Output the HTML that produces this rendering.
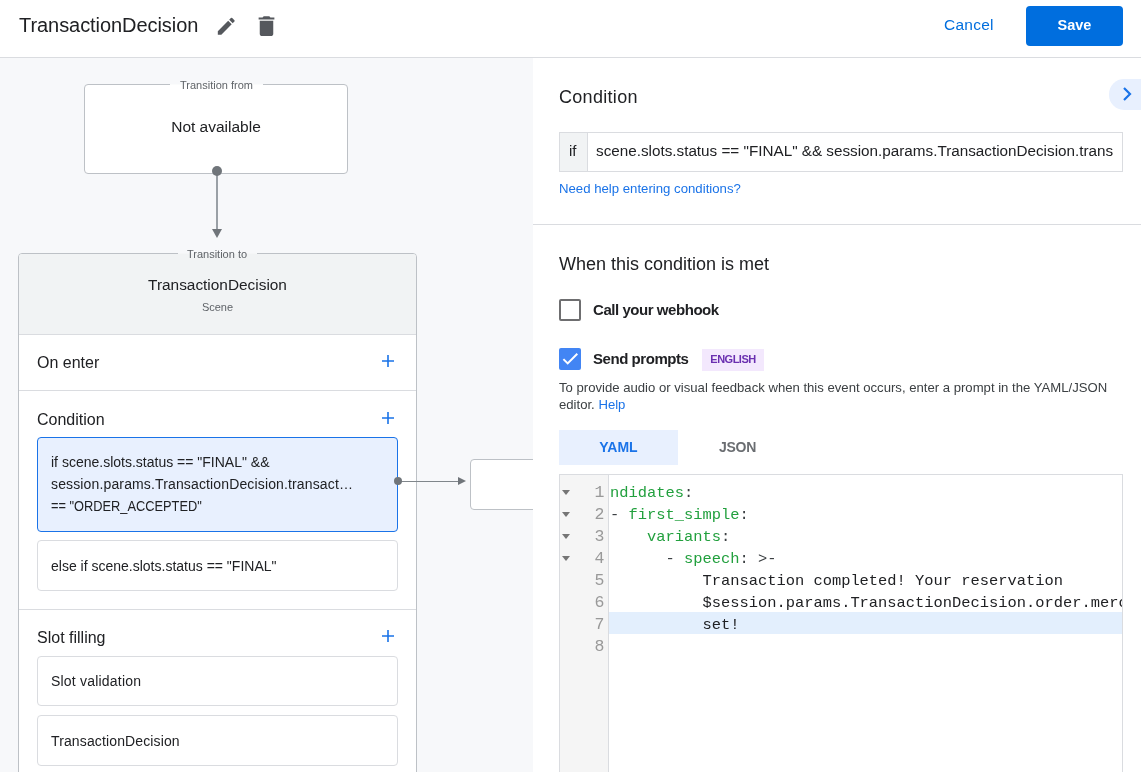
<!DOCTYPE html>
<html>
<head>
<meta charset="utf-8">
<style>
* { box-sizing: border-box; }
html, body { margin: 0; padding: 0; width: 1141px; height: 772px; overflow: hidden; background: #fff; }
body { font-family: "Liberation Sans", sans-serif; color: #202124; position: relative; }
.a { position: absolute; white-space: nowrap; }
.mono { font-family: "Liberation Mono", monospace; }
.ln { position:absolute; left:0; width:44.5px; text-align:right; font-size:16.5px; line-height:22px; margin-top:1.5px; color:#999; white-space:pre; }
.code { position:absolute; left:50px; font-size:15.42px; line-height:22px; margin-top:1.5px; color:#202124; white-space:pre; }
.k { color:#22a03e; }
.p { color:#3c4043; }
</style>
</head>
<body>
<div id="root" style="position:absolute;left:0;top:0;width:1141px;height:772px;overflow:hidden;will-change:transform;">
<!-- header -->
<div class="a" style="left:0;top:0;width:1141px;height:57px;background:#fff;"></div>
<div class="a" style="left:0;top:57px;width:1141px;height:1px;background:#dadce0;"></div>
<div class="a" style="left:19px;top:9px;font-size:20px;line-height:32px;letter-spacing:-0.06px;color:#202124;">TransactionDecision</div>
<!-- pencil -->
<svg class="a" style="left:215.2px;top:14.8px" width="22.5" height="22.5" viewBox="0 0 24 24"><path fill="#55585d" d="M3 17.25V21h3.75L17.81 9.94l-3.75-3.75L3 17.25zM20.71 7.04a.996.996 0 0 0 0-1.41l-2.34-2.34a.996.996 0 0 0-1.41 0l-1.83 1.83 3.75 3.75 1.83-1.83z"/></svg>
<!-- trash -->
<svg class="a" style="left:252.7px;top:12.6px" width="27" height="26.4" viewBox="0 0 24 24" preserveAspectRatio="none"><path fill="#55585d" d="M6 19c0 1.1.9 2 2 2h8c1.1 0 2-.9 2-2V7H6v12zM19 4h-3.5l-1-1h-5l-1 1H5v2h14V4z"/></svg>
<div class="a" style="left:944px;top:12.5px;font-size:15.5px;line-height:24px;letter-spacing:0.25px;color:#006ede;">Cancel</div>
<div class="a" style="left:1026px;top:6px;width:97px;height:40px;background:#006ede;border-radius:4px;"></div>
<div class="a" style="left:1026px;top:5px;width:97px;height:40px;font-size:14.5px;line-height:40px;color:#fff;text-align:center;font-weight:bold;">Save</div>

<!-- left panel -->
<div class="a" style="left:0;top:58px;width:533px;height:714px;background:#f7f8fa;"></div>

<!-- transition from -->
<div class="a" style="left:84px;top:84px;width:264px;height:90px;background:#fff;border:1px solid #bdc1c6;border-radius:4px;"></div>
<div class="a" style="left:170px;top:84px;width:93px;height:1px;background:#fbfcfc;"></div>
<div class="a" style="left:170px;top:77px;width:93px;font-size:11px;line-height:16px;color:#5f6368;text-align:center;">Transition from</div>
<div class="a" style="left:84px;top:115px;width:264px;font-size:15.5px;line-height:24px;text-align:center;">Not available</div>
<div class="a" style="left:216px;top:171px;width:2px;height:58px;background:#9aa0a6;"></div>
<div class="a" style="left:212px;top:166px;width:10px;height:10px;border-radius:50%;background:#70757a;"></div>
<svg class="a" style="left:212px;top:229px" width="10" height="9" viewBox="0 0 10 9"><path d="M0 0 L10 0 L5 9 Z" fill="#70757a"/></svg>

<!-- transition to box -->
<div class="a" style="left:18px;top:253px;width:399px;height:540px;background:#fff;border:1px solid #bdc1c6;border-radius:4px;overflow:hidden;">
  <div style="position:absolute;left:0;top:0;width:100%;height:81px;background:#f1f3f4;"></div>
</div>
<div class="a" style="left:178px;top:253px;width:79px;height:1px;background:#f5f6f7;"></div>
<div class="a" style="left:177px;top:246px;width:80px;font-size:11px;line-height:16px;color:#5f6368;text-align:center;">Transition to</div>
<div class="a" style="left:18px;top:273px;width:399px;font-size:15.4px;line-height:24px;text-align:center;">TransactionDecision</div>
<div class="a" style="left:18px;top:299px;width:399px;font-size:11px;line-height:16px;text-align:center;color:#5f6368;">Scene</div>
<div class="a" style="left:19px;top:334px;width:397px;height:1px;background:#dadce0;"></div>
<div class="a" style="left:37px;top:351px;font-size:16px;line-height:24px;">On enter</div>
<svg class="a" style="left:380px;top:353px" width="16" height="16" viewBox="0 0 16 16"><path d="M8 2v12M2 8h12" stroke="#1a73e8" stroke-width="1.6"/></svg>
<div class="a" style="left:19px;top:390px;width:397px;height:1px;background:#dadce0;"></div>
<div class="a" style="left:37px;top:408px;font-size:16px;line-height:24px;">Condition</div>
<svg class="a" style="left:380px;top:410px" width="16" height="16" viewBox="0 0 16 16"><path d="M8 2v12M2 8h12" stroke="#1a73e8" stroke-width="1.6"/></svg>

<div class="a" style="left:37px;top:437px;width:361px;height:95px;background:#e8f0fe;border:1px solid #1a73e8;border-radius:4px;"></div>
<div class="a" style="left:51px;top:451px;font-size:14px;line-height:22px;">if scene.slots.status == "FINAL" &amp;&amp;<br><span style="letter-spacing:0.14px">session.params.TransactionDecision.transact…</span><br><span style="display:inline-block;transform:scaleX(0.915);transform-origin:0 0;">== "ORDER_ACCEPTED"</span></div>
<div class="a" style="left:37px;top:540px;width:361px;height:51px;background:#fff;border:1px solid #dadce0;border-radius:4px;"></div>
<div class="a" style="left:51px;top:555px;font-size:14px;line-height:22px;">else if scene.slots.status == "FINAL"</div>
<!-- connector -->
<div class="a" style="left:398px;top:480.5px;width:62px;height:1.2px;background:#80868b;"></div>
<div class="a" style="left:394px;top:477px;width:8px;height:8px;border-radius:50%;background:#70757a;"></div>
<svg class="a" style="left:458px;top:477px" width="8" height="8" viewBox="0 0 8 8"><path d="M0 0 L8 4 L0 8 Z" fill="#70757a"/></svg>
<div class="a" style="left:470px;top:459px;width:100px;height:51px;background:#fff;border:1px solid #bdc1c6;border-radius:4px;"></div>

<div class="a" style="left:19px;top:609px;width:397px;height:1px;background:#dadce0;"></div>
<div class="a" style="left:37px;top:626px;font-size:16px;line-height:24px;">Slot filling</div>
<svg class="a" style="left:380px;top:628px" width="16" height="16" viewBox="0 0 16 16"><path d="M8 2v12M2 8h12" stroke="#1a73e8" stroke-width="1.6"/></svg>
<div class="a" style="left:37px;top:656px;width:361px;height:50px;background:#fff;border:1px solid #dadce0;border-radius:4px;"></div>
<div class="a" style="left:51px;top:670px;font-size:14px;line-height:22px;letter-spacing:0.2px;">Slot validation</div>
<div class="a" style="left:37px;top:715px;width:361px;height:51px;background:#fff;border:1px solid #dadce0;border-radius:4px;"></div>
<div class="a" style="left:51px;top:730px;font-size:14px;line-height:22px;letter-spacing:0.13px;">TransactionDecision</div>

<!-- right panel -->
<div class="a" style="left:533px;top:58px;width:608px;height:714px;background:#fff;"></div>
<div class="a" style="left:559px;top:84px;font-size:18px;line-height:26px;letter-spacing:0.3px;">Condition</div>
<div class="a" style="left:1109px;top:79px;width:40px;height:31px;background:#e8f0fe;border-radius:15px 0 0 15px;"></div>
<svg class="a" style="left:1117px;top:82px" width="20" height="24" viewBox="0 0 20 24"><path d="M7 6 L13 12 L7 18" fill="none" stroke="#1a73e8" stroke-width="2.2"/></svg>

<div class="a" style="left:559px;top:132px;width:564px;height:40px;border:1px solid #dadce0;background:#fff;"></div>
<div class="a" style="left:560px;top:133px;width:28px;height:38px;background:#f1f3f4;border-right:1px solid #dadce0;"></div>
<div class="a" style="left:569px;top:141px;font-size:15px;line-height:20px;">if</div>
<div class="a" style="left:596px;top:141px;width:518px;overflow:hidden;font-size:15.25px;line-height:20px;">scene.slots.status == "FINAL" &amp;&amp; session.params.TransactionDecision.trans</div>
<div class="a" style="left:559px;top:180px;font-size:13.2px;line-height:18px;color:#1a73e8;">Need help entering conditions?</div>

<div class="a" style="left:533px;top:224px;width:608px;height:1px;background:#dadce0;"></div>
<div class="a" style="left:559px;top:251px;font-size:18px;line-height:26px;">When this condition is met</div>

<div class="a" style="left:559px;top:299px;width:22px;height:22px;border:2px solid #6e6e70;border-radius:2px;"></div>
<div class="a" style="left:593px;top:300px;font-size:15px;line-height:20px;font-weight:bold;letter-spacing:-0.45px;">Call your webhook</div>
<div class="a" style="left:559px;top:348px;width:22px;height:22px;background:#4285f4;border-radius:2px;"></div>
<svg class="a" style="left:559px;top:348px" width="22" height="22" viewBox="0 0 22 22"><path d="M4.4 11.1 L8.7 15.4 L18.3 5.8" fill="none" stroke="#fff" stroke-width="2"/></svg>
<div class="a" style="left:593px;top:349px;font-size:15px;line-height:20px;font-weight:bold;letter-spacing:-0.45px;">Send prompts</div>
<div class="a" style="left:702px;top:349px;width:62px;height:22px;background:#f3e8fd;"></div>
<div class="a" style="left:702px;top:348px;width:62px;height:22px;font-size:11px;line-height:22px;text-align:center;font-weight:bold;letter-spacing:-0.5px;color:#6a2fb0;">ENGLISH</div>
<div class="a" style="left:559px;top:379px;font-size:13.13px;line-height:17px;color:#3c4043;">To provide audio or visual feedback when this event occurs, enter a prompt in the YAML/JSON<br>editor. <span style="color:#1a73e8">Help</span></div>

<div class="a" style="left:559px;top:430px;width:119px;height:35px;background:#e8f0fe;"></div>
<div class="a" style="left:559px;top:430px;width:119px;height:35px;font-size:14px;line-height:35px;text-align:center;font-weight:bold;color:#1a73e8;">YAML</div>
<div class="a" style="left:678px;top:430px;width:119px;height:35px;font-size:14px;line-height:35px;text-align:center;font-weight:bold;letter-spacing:-0.3px;color:#6a6d71;">JSON</div>

<!-- editor -->
<div class="a" style="left:559px;top:474px;width:564px;height:320px;border:1px solid #dadce0;background:#fff;overflow:hidden;">
  <div style="position:absolute;left:0;top:0;width:49px;height:100%;background:#f5f5f5;border-right:1px solid #dadce0;"></div>
</div>
<div class="a" style="left:560px;top:475px;width:562px;height:297px;overflow:hidden;">
<div style="position:absolute;left:49px;top:137px;width:520px;height:22px;background:#e3effd;"></div>
<svg style="position:absolute;left:1.5px;top:15px" width="8" height="5" viewBox="0 0 8 5"><path d="M0 0 L8 0 L4 5 Z" fill="#757575"/></svg>
<div class="mono ln" style="top:5px;">1</div>
<div class="mono code" style="top:5px;"><span class="k">ndidates</span><span class="p">:</span></div>
<svg style="position:absolute;left:1.5px;top:37px" width="8" height="5" viewBox="0 0 8 5"><path d="M0 0 L8 0 L4 5 Z" fill="#757575"/></svg>
<div class="mono ln" style="top:27px;">2</div>
<div class="mono code" style="top:27px;"><span class="p">-</span> <span class="k">first_simple</span><span class="p">:</span></div>
<svg style="position:absolute;left:1.5px;top:59px" width="8" height="5" viewBox="0 0 8 5"><path d="M0 0 L8 0 L4 5 Z" fill="#757575"/></svg>
<div class="mono ln" style="top:49px;">3</div>
<div class="mono code" style="top:49px;">    <span class="k">variants</span><span class="p">:</span></div>
<svg style="position:absolute;left:1.5px;top:81px" width="8" height="5" viewBox="0 0 8 5"><path d="M0 0 L8 0 L4 5 Z" fill="#757575"/></svg>
<div class="mono ln" style="top:71px;">4</div>
<div class="mono code" style="top:71px;">      <span class="p">-</span> <span class="k">speech</span><span class="p">: &gt;-</span></div>
<div class="mono ln" style="top:93px;">5</div>
<div class="mono code" style="top:93px;">          Transaction completed! Your reservation</div>
<div class="mono ln" style="top:115px;">6</div>
<div class="mono code" style="top:115px;">          $session.params.TransactionDecision.order.merchantOrderId is all</div>
<div class="mono ln" style="top:137px;">7</div>
<div class="mono code" style="top:137px;">          set!</div>
<div class="mono ln" style="top:159px;">8</div>
</div>
</div>
</body>
</html>
